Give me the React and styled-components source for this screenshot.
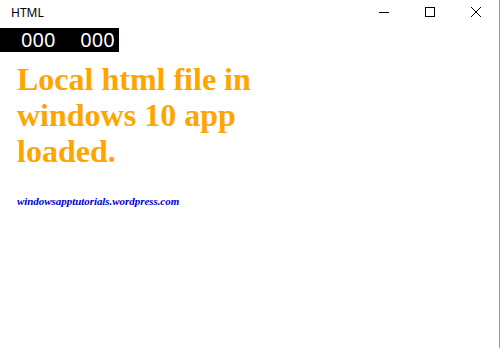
import { createGlobalStyle, styled } from "styled-components";

const Global = createGlobalStyle`
    html, body {
        margin: 0;
        padding: 0;
        background: #ffffff;
    }
`;

const Window = styled.div`
    width: 500px;
    height: 348px;
    box-sizing: border-box;
    border-right: 1px solid #9a9a9a;
    background: #ffffff;
    display: flex;
    flex-direction: column;
    overflow: hidden;
`;

const TitleBar = styled.div`
    height: 24px;
    display: flex;
    align-items: center;
    justify-content: space-between;
    padding-left: 11px;
    font-family: "Noto Sans", "Open Sans", sans-serif;
    font-size: 12px;
    color: #000;
`;

const Controls = styled.div`
    display: flex;
    height: 100%;
`;

const ControlBtn = styled.div`
    width: 46px;
    height: 100%;
    display: flex;
    align-items: center;
    justify-content: center;
`;

const Counter = styled.div`
    align-self: flex-start;
    margin-top: 4px;
    width: 119px;
    height: 24px;
    background: #000;
    color: #fff;
    display: flex;
    align-items: center;
    gap: 25px;
    padding-left: 21px;
    box-sizing: border-box;
    font-family: "Noto Sans", "Open Sans", sans-serif;
    font-size: 20px;
    line-height: 1;
`;

const Content = styled.div`
    padding-left: 17px;
`;

const Heading = styled.h1`
    margin: 9px 0 0 0;
    color: #ffa500;
    font-family: "Liberation Serif", "Times New Roman", serif;
    font-weight: bold;
    font-size: 32px;
    line-height: 36px;
`;

const Link = styled.div`
    margin-top: 26px;
    color: #0000cc;
    font-family: "Liberation Serif", "Times New Roman", serif;
    font-style: italic;
    font-weight: bold;
    font-size: 11px;
    letter-spacing: -0.05px;
`;

export default function App() {
    return (
        <>
            <Global />
            <Window>
                <TitleBar>
                    <span>HTML</span>
                    <Controls>
                        <ControlBtn>
                            <svg width="10" height="10" viewBox="0 0 10 10">
                                <line x1="0" y1="5.5" x2="10" y2="5.5" stroke="#000" strokeWidth="1" />
                            </svg>
                        </ControlBtn>
                        <ControlBtn>
                            <svg width="10" height="10" viewBox="0 0 10 10">
                                <rect x="0.5" y="0.5" width="9" height="9" fill="none" stroke="#000" strokeWidth="1" />
                            </svg>
                        </ControlBtn>
                        <ControlBtn>
                            <svg width="10" height="10" viewBox="0 0 10 10">
                                <path d="M0 0 L10 10 M10 0 L0 10" stroke="#000" strokeWidth="1" />
                            </svg>
                        </ControlBtn>
                    </Controls>
                </TitleBar>
                <Counter>
                    <span>000</span>
                    <span>000</span>
                </Counter>
                <Content>
                    <Heading>
                        Local html file in<br />
                        windows 10 app<br />
                        loaded.
                    </Heading>
                    <Link>windowsapptutorials.wordpress.com</Link>
                </Content>
            </Window>
        </>
    );
}
